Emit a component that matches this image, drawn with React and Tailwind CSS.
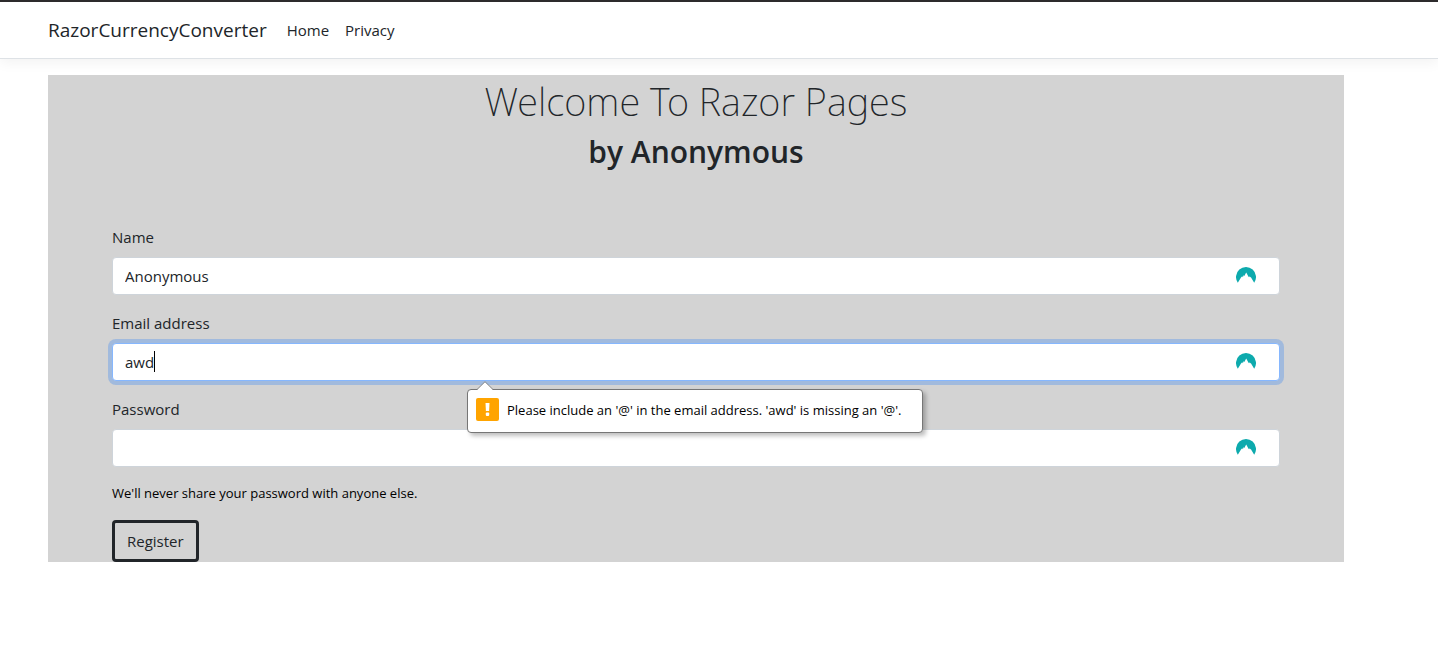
import React from "react";

function MountainIcon() {
  return (
    <svg
      aria-hidden="true"
      viewBox="0 0 20 16"
      className="pointer-events-none absolute top-2.5 right-6 h-4 w-5"
    >
      <path
        fill="#0daaad"
        d="M1.8 15.8A10 10 0 1 1 18.2 15.8L14.6 9.8L14.1 10.6L13.2 9.2L12.8 10.2L10.2 5.6L8.3 9L7.4 8.2L7 10.2L6.2 9.2L5 10.6Z"
      />
    </svg>
  );
}

function Field({ id, label, type, defaultValue, focused, children }) {
  const look = focused
    ? "border-[#86b7fe] shadow-[0_0_0_4px_#0d6efd40]"
    : "border-[#ced4da]";
  return (
    <div className="mb-4">
      <label htmlFor={id} className="mb-2 block leading-6">
        {label}
      </label>
      <div className="relative">
        <input
          id={id}
          type={type}
          defaultValue={defaultValue}
          className={`block h-[38px] w-full rounded border bg-white px-3 pr-14 outline-none ${look}`}
        />
        <MountainIcon />
        {children}
      </div>
    </div>
  );
}

function ValidationBubble() {
  return (
    <div
      role="alert"
      className="absolute top-[46px] left-[355px] z-10 flex h-11 w-[456px] items-center gap-2 rounded border border-[#767676] bg-white px-2 text-[13px] whitespace-nowrap text-black shadow-[3px_3px_4px_#00000040]"
    >
      <svg
        aria-hidden="true"
        viewBox="0 0 18 9"
        className="absolute -top-[9px] left-2 h-[9px] w-[18px]"
      >
        <path d="M1 9L9 1L17 9Z" fill="#fff" />
        <path d="M1 8.5L9 .7L17 8.5" fill="none" stroke="#8a8a8a" />
      </svg>
      <svg aria-hidden="true" viewBox="0 0 23 23" className="mb-1 size-[23px]">
        <rect width="23" height="23" rx="2" fill="#ffa400" />
        <path d="M9.5 5H13.5L13.1 13H9.9Z" fill="#fff" />
        <rect x="9.8" y="14.5" width="3.4" height="3.4" rx="1" fill="#fff" />
      </svg>
      <span>Please include an '@' in the email address. 'awd' is missing an '@'.</span>
    </div>
  );
}

export default function App() {
  return (
    <div className="font-['Open_Sans','Noto_Sans',sans-serif] text-[15px] text-[#212529]">
      <header className="border-t-2 border-b border-t-[#2d2b2c] border-b-[#dee2e6] bg-white shadow-[0_4px_12px_#0000000d]">
        <nav className="flex h-14 items-center px-12">
          <a href="#" className="mr-5 text-[19px]">
            RazorCurrencyConverter
          </a>
          <div className="flex gap-4">
            <a href="#">Home</a>
            <a href="#">Privacy</a>
          </div>
        </nav>
      </header>

      <main className="mt-4 mr-12 ml-12 max-w-[1296px] bg-[#d3d3d3]">
        <div className="pt-0.5 text-center">
          <h1 className="mb-2 font-['Noto_Sans','Open_Sans',sans-serif] text-[38px] leading-[48px] font-extralight">
            Welcome To Razor Pages
          </h1>
          <h2 className="text-[30px] leading-[38px] font-semibold">by Anonymous</h2>
        </div>
        <form noValidate className="px-16 pt-[54px]" onSubmit={(e) => e.preventDefault()}>
          <Field id="name" label="Name" type="text" defaultValue="Anonymous" />
          <Field id="email" label="Email address" type="email" defaultValue="awd" focused>
            <span
              aria-hidden="true"
              className="absolute top-2 left-[42px] h-[21px] w-px bg-black"
            />
            <ValidationBubble />
          </Field>
          <Field id="password" label="Password" type="password" />
          <p className="mb-4 text-[13px] leading-[21px] text-black">
            We'll never share your password with anyone else.
          </p>
          <button
            type="submit"
            className="block h-[42px] rounded border-3 border-[#212529] px-3"
          >
            Register
          </button>
        </form>
      </main>
    </div>
  );
}
